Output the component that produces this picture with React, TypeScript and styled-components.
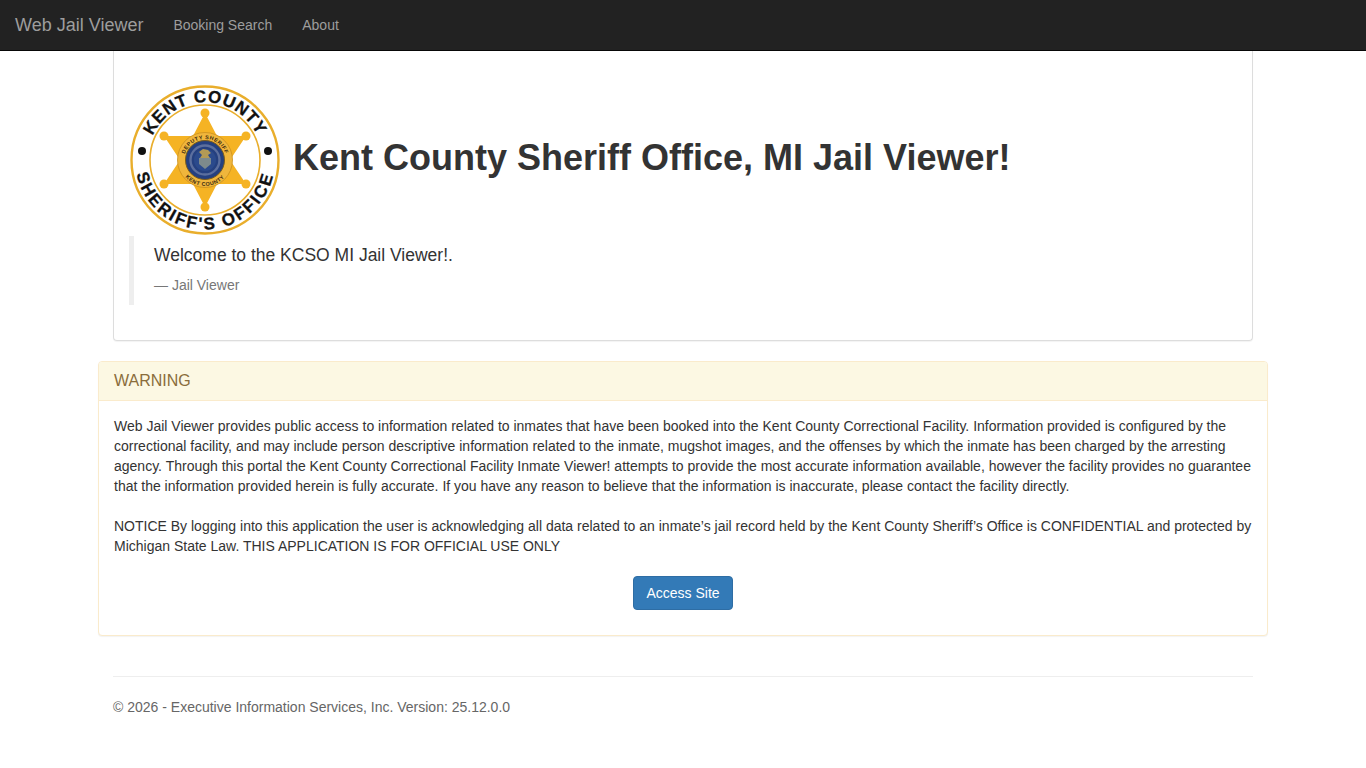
import React from 'react';
import styled, { createGlobalStyle } from 'styled-components';

const GlobalStyle = createGlobalStyle`
  html, body {
    margin: 0;
    padding: 0;
    background: #fff;
  }

  body {
    font-family: "Liberation Sans", Arial, sans-serif;
    font-size: 14px;
    line-height: 20px;
    color: #333;
  }

  * {
    box-sizing: border-box;
  }
`;

const Navbar = styled.nav`
  height: 51px;
  display: flex;
  align-items: center;
  background: #222;
  border-bottom: 1px solid #080808;
`;

const Brand = styled.a`
  padding: 0 15px;
  font-size: 18px;
  color: #9d9d9d;
`;

const NavLink = styled.a`
  padding: 0 15px;
  color: #9d9d9d;
`;

const Container = styled.main`
  width: 1170px;
  margin: 0 auto;
`;

const Jumbo = styled.section`
  margin: 0 15px 20px;
  height: 290px;
  padding: 0 15px;
  border: 1px solid #ddd;
  border-top: none;
  border-radius: 0 0 4px 4px;
  box-shadow: 0 1px 1px rgba(0, 0, 0, 0.05);
`;

const Heading = styled.div`
  display: flex;
  align-items: center;
  gap: 13px;
  padding: 34px 0 0 1px;
`;

const Title = styled.h1`
  margin: 0 0 4px;
  font-size: 36px;
  line-height: 40px;
  font-weight: 700;
  color: #333;
`;

const Quote = styled.blockquote`
  margin: 1px 0 0;
  padding: 7px 20px 10px;
  border-left: 5px solid #eee;
  font-size: 17.5px;
  line-height: 25px;
`;

const QuoteText = styled.p`
  margin: 0 0 7px;
`;

const QuoteFooter = styled.footer`
  font-size: 14px;
  line-height: 20px;
  color: #777;
`;

const Panel = styled.section`
  height: 275px;
  margin-bottom: 40px;
  background: #fff;
  border: 1px solid #faebcc;
  border-radius: 4px;
  box-shadow: 0 1px 1px rgba(0, 0, 0, 0.05);
`;

const PanelHeading = styled.div`
  height: 39px;
  padding: 0 15px;
  display: flex;
  align-items: center;
  font-size: 16px;
  color: #8a6d3b;
  background: #fcf8e3;
  border-bottom: 1px solid #faebcc;
  border-radius: 3px 3px 0 0;
`;

const PanelBody = styled.div`
  padding: 15px;
`;

const Notice = styled.p`
  margin: 0;
  & + & {
    margin-top: 20px;
  }
`;

const Actions = styled.div`
  display: flex;
  justify-content: center;
  margin-top: 20px;
`;

const PrimaryButton = styled.button`
  height: 34px;
  padding: 0 12px;
  width: 100px;
  font: inherit;
  color: #fff;
  background: #337ab7;
  border: 1px solid #2e6da4;
  border-radius: 4px;
`;

const Footer = styled.footer`
  margin: 0 15px;
  padding-top: 20px;
  border-top: 1px solid #eee;
  color: #666;
`;

const LogoSvg = styled.svg`
  flex: none;
  font-family: "Liberation Sans", sans-serif;
  font-weight: 700;
`;

const StarTips: [number, number][] = [[0, -47], [41, -24], [41, 24], [0, 47], [-41, 24], [-41, -24]];

const Logo = () => (
  <LogoSvg width="150" height="150" viewBox="-75 -75 150 150">
    <defs>
      <path id="arcTop" d="M -56 -14 A 57.7 57.7 0 0 1 56 -14" />
      <path id="arcBottom" d="M -69.7 6 A 70 70 0 0 0 69.7 6" />
      <path id="discTop" d="M -21 0 A 21 21 0 0 1 21 0" />
      <path id="discBottom" d="M -26 0 A 26 26 0 0 0 26 0" />
    </defs>
    <circle r="73.5" fill="#fff" stroke="#e9ae2c" strokeWidth="2.4" />
    <circle r="55" fill="#fff" stroke="#e9ae2c" strokeWidth="1.6" />
    <polygon
      fill="#f5b324"
      points="0,-47 12,-24 41,-24 25,0 41,24 12,24 0,47 -12,24 -41,24 -25,0 -41,-24 -12,-24"
    />
    {StarTips.map(([x, y]) => (
      <circle key={`${x}:${y}`} cx={x} cy={y} r="4.5" fill="#f5b324" />
    ))}
    <circle r="27.5" fill="#f0b63c" stroke="#c98f1e" strokeWidth="0.8" />
    <circle r="19.5" fill="#25407f" stroke="#7a5c1c" strokeWidth="1" />
    <circle r="14.5" fill="none" stroke="#5c6f9e" strokeWidth="2.4" />
    <circle r="11" fill="#2b4a8c" />
    <path d="M -6 -8 L -2 -11 L 3 -10 L 6 -7 L 3 -5 L 5 -2 L -5 -2 L -3 -5 Z" fill="#b39a55" />
    <path d="M -6 -2 L 6 -2 L 6 4 L 0 9 L -6 4 Z" fill="#7d8a8c" />
    <text fontSize="5.4" letterSpacing="0.5" fill="#3a2a10">
      <textPath href="#discTop" startOffset="50%" textAnchor="middle">DEPUTY SHERIFF</textPath>
    </text>
    <text fontSize="5.4" letterSpacing="0.5" fill="#3a2a10">
      <textPath href="#discBottom" startOffset="50%" textAnchor="middle">KENT COUNTY</textPath>
    </text>
    <circle cx="-63" cy="-9" r="4" fill="#111" />
    <circle cx="63" cy="-9" r="4" fill="#111" />
    <text fontSize="17" letterSpacing="0.8" fill="#111" stroke="#111" strokeWidth="0.3">
      <textPath href="#arcTop" startOffset="50%" textAnchor="middle">KENT COUNTY</textPath>
    </text>
    <text fontSize="17" letterSpacing="2.2" fill="#111" stroke="#111" strokeWidth="0.3">
      <textPath href="#arcBottom" startOffset="50%" textAnchor="middle">SHERIFF'S OFFICE</textPath>
    </text>
  </LogoSvg>
);

export default function App() {
  return (
    <>
      <GlobalStyle />
      <Navbar>
        <Brand>Web Jail Viewer</Brand>
        <NavLink>Booking Search</NavLink>
        <NavLink>About</NavLink>
      </Navbar>
      <Container>
        <Jumbo>
          <Heading>
            <Logo />
            <Title>Kent County Sheriff Office, MI Jail Viewer!</Title>
          </Heading>
          <Quote>
            <QuoteText>Welcome to the KCSO MI Jail Viewer!.</QuoteText>
            <QuoteFooter>— Jail Viewer</QuoteFooter>
          </Quote>
        </Jumbo>
        <Panel>
          <PanelHeading>WARNING</PanelHeading>
          <PanelBody>
            <Notice>
              Web Jail Viewer provides public access to information related to inmates that have been booked into the Kent County Correctional Facility. Information provided is configured by the correctional facility, and may include person descriptive information related to the inmate, mugshot images, and the offenses by which the inmate has been charged by the arresting agency. Through this portal the Kent County Correctional Facility Inmate Viewer! attempts to provide the most accurate information available, however the facility provides no guarantee that the information provided herein is fully accurate. If you have any reason to believe that the information is inaccurate, please contact the facility directly.
            </Notice>
            <Notice>
              NOTICE By logging into this application the user is acknowledging all data related to an inmate’s jail record held by the Kent County Sheriff’s Office is CONFIDENTIAL and protected by Michigan State Law. THIS APPLICATION IS FOR OFFICIAL USE ONLY
            </Notice>
            <Actions>
              <PrimaryButton>Access Site</PrimaryButton>
            </Actions>
          </PanelBody>
        </Panel>
        <Footer>© 2026 - Executive Information Services, Inc. Version: 25.12.0.0</Footer>
      </Container>
    </>
  );
}
